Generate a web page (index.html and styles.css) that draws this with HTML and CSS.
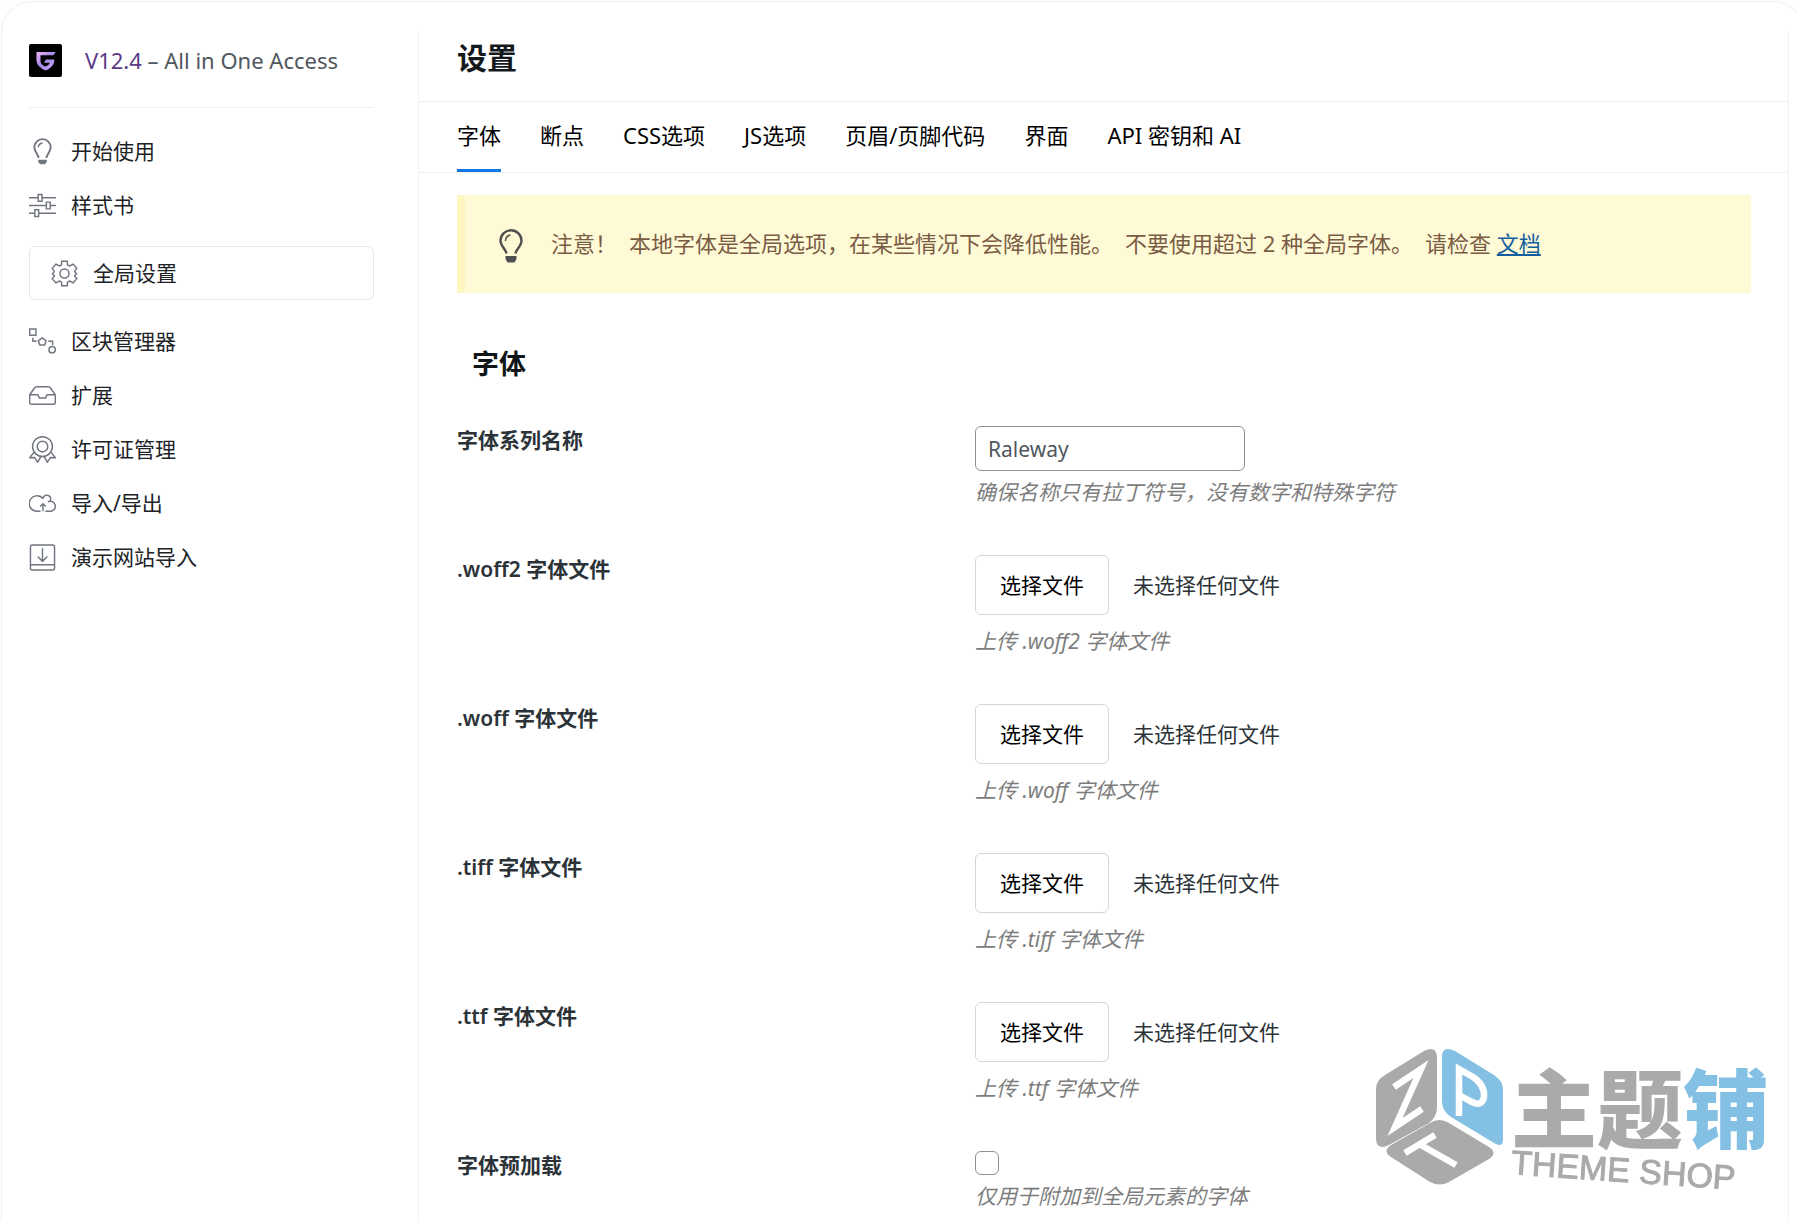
FILE: index.html
```html
<!DOCTYPE html>
<html lang="zh-CN">
<head>
<meta charset="utf-8">
<meta name="viewport" content="width=device-width, initial-scale=1">
<title>设置</title>
<link rel="stylesheet" href="styles.css">
</head>
<body>
<div class="frame">
  <aside class="sidebar">
    <div class="brand">
      <svg class="brand-logo" viewBox="0 0 33 33" aria-hidden="true">
        <defs><linearGradient id="shield" x1="0" y1="0" x2="1" y2="1"><stop offset="0" stop-color="#f3b5f5"/><stop offset=".45" stop-color="#a78bea"/><stop offset="1" stop-color="#c9a5f5"/></linearGradient></defs>
        <rect width="33" height="33" rx="2" fill="#000"/>
        <path d="M7.500 8H26.500L24.500 11.200H11.500V17.500q.5 3.500 5.200 5 3.300-1.500 4.300-3.700H15l2-3.300h8.300V17q-.5 6-8.600 9.500-8.700-3.500-9.200-9.500z" fill="url(#shield)"/>
      </svg>
      <p class="brand-text"><a href="#version">V12.4</a> – All in One Access</p>
    </div>
    <nav class="menu">
      <a class="menu-item" href="#start">
        <svg class="icon" viewBox="0 0 28 28"><path d="M10 20.500C9.500 17 5.500 14 5.500 9.700a8.500 8.500 0 0 1 17 0C22.500 14 18.500 17 18 20.500" stroke-width="2"/><path d="M9.500 9.500q.5-3.500 4.500-4.300"/><path d="M9.500 22.500h9v2.200l-2 2.500h-5l-2-2.500z" fill="currentColor" stroke="none"/></svg>
        开始使用</a>
      <a class="menu-item" href="#stylebook">
        <svg class="icon" viewBox="0 0 28 28"><path d="M0 6h9.500M13.500 6H28M0 14h18M22 14h6M0 22h6M10 22h18M9.500 2.500h4v7h-4zM18 10.500h4v7h-4zM6 18.500h4v7H6z"/></svg>
        样式书</a>
      <a class="menu-item is-current" href="#global" aria-current="page">
        <svg class="icon" viewBox="0 0 28 28"><path d="M11 5V1.200h6V5l2.500 1.200 3.300-2 4 4.500-2.300 2.800.7 1.700 1.300.8-.3 1.200-1.700.8v.8l2.300 2.500-4 4.500-3.300-2L17 23v3.800h-6V23l-2.500-1.200-3.300 2-4-4.500L3.500 16.800V16l-1.700-.8-.3-1.200 1.300-.8.700-1.700L1.200 8.700l4-4.500 3.300 2z" stroke-linejoin="round"/><circle cx="14" cy="14" r="4.700"/></svg>
        全局设置</a>
      <a class="menu-item" href="#blocks">
        <svg class="icon" viewBox="0 0 28 28"><path d="M.7 1h6.500v6.500H.7zM4 10v3.800h4M20 13.800h4.500V17.500M13.700 10.200l4 3-1.500 4.500h-5l-1.500-4.500z"/><circle cx="24" cy="22.500" r="3.300"/></svg>
        区块管理器</a>
      <a class="menu-item" href="#extensions">
        <svg class="icon" viewBox="0 0 28 28"><path d="M.7 13.200 5.500 6.500q1-1.500 2.500-1.500h12q1.500 0 2.500 1.500l4.800 6.700V21q0 2-2 2H2.700q-2 0-2-2zM.7 13.200h8.500l1.600 3.300h6.400l1.600-3.300h8.500"/></svg>
        扩展</a>
      <a class="menu-item" href="#license">
        <svg class="icon" viewBox="0 0 28 28"><circle cx="14" cy="11" r="10.300"/><circle cx="14" cy="11" r="5.500"/><path d="m5 17-4.300 5.500 5-.3 3.300 5 3.500-6M23 17l4.300 5.500-5-.3-3.300 5-3.500-6"/></svg>
        许可证管理</a>
      <a class="menu-item" href="#transfer">
        <svg class="icon" viewBox="0 0 28 28"><path d="M12 22H8.500A8 8 0 1 1 14.500 9M14.500 9a4 4 0 1 1 7 3M19.500 12.300a5.200 5.200 0 1 1 2.500 9.700H17M14.500 22v-7.500M11.500 17.200l3-3 3 3"/></svg>
        导入/导出</a>
      <a class="menu-item" href="#demo">
        <svg class="icon" viewBox="0 0 28 28"><rect x="1.500" y="1" width="25" height="26" rx="2"/><path d="M1.500 21.500h25M14 4.500v13M9 13l5 5 5-5"/></svg>
        演示网站导入</a>
    </nav>
  </aside>

  <main class="content">
    <header class="page-head"><h1>设置</h1></header>
    <nav class="tabs">
      <a class="tab is-active" href="#fonts">字体</a>
      <a class="tab" href="#breakpoints">断点</a>
      <a class="tab" href="#css">CSS选项</a>
      <a class="tab" href="#js">JS选项</a>
      <a class="tab" href="#codes">页眉/页脚代码</a>
      <a class="tab" href="#interface">界面</a>
      <a class="tab" href="#api">API 密钥和 AI</a>
    </nav>

    <div class="notice">
      <svg class="notice-icon" viewBox="0 -4 28 38"><path d="M9.500 24.500C9 20.500 3.500 17 3.500 11.800a10.500 10.500 0 0 1 21 0C24.500 17 19 20.500 18.500 24.500" fill="none" stroke="currentColor" stroke-width="2.400"/><path d="M8.500 12q0-5 5-6" fill="none" stroke="currentColor" stroke-width="1.500"/><path d="M8.500 27h11v3l-2 3.500h-7l-2-3.500z" fill="currentColor"/></svg>
      <p class="notice-text"><span>注意！</span> <span>本地字体是全局选项，在某些情况下会降低性能。</span> <span>不要使用超过 2 种全局字体。</span> <span>请检查 <a href="#docs">文档</a></span></p>
    </div>

    <form class="form">
      <h2>字体</h2>
      <div class="row">
        <label class="row-label" for="family">字体系列名称</label>
        <div class="field">
          <input class="text-input" id="family" type="text" placeholder="Raleway">
          <p class="hint">确保名称只有拉丁符号，没有数字和特殊字符</p>
        </div>
      </div>
      <div class="row">
        <label class="row-label" for="woff2">.woff2 字体文件</label>
        <div class="field">
          <div class="file"><button class="file-button" type="button" tabindex="-1">选择文件</button><span>未选择任何文件</span><input id="woff2" type="file"></div>
          <p class="hint">上传 .woff2 字体文件</p>
        </div>
      </div>
      <div class="row">
        <label class="row-label" for="woff">.woff 字体文件</label>
        <div class="field">
          <div class="file"><button class="file-button" type="button" tabindex="-1">选择文件</button><span>未选择任何文件</span><input id="woff" type="file"></div>
          <p class="hint">上传 .woff 字体文件</p>
        </div>
      </div>
      <div class="row">
        <label class="row-label" for="tiff">.tiff 字体文件</label>
        <div class="field">
          <div class="file"><button class="file-button" type="button" tabindex="-1">选择文件</button><span>未选择任何文件</span><input id="tiff" type="file"></div>
          <p class="hint">上传 .tiff 字体文件</p>
        </div>
      </div>
      <div class="row">
        <label class="row-label" for="ttf">.ttf 字体文件</label>
        <div class="field">
          <div class="file"><button class="file-button" type="button" tabindex="-1">选择文件</button><span>未选择任何文件</span><input id="ttf" type="file"></div>
          <p class="hint">上传 .ttf 字体文件</p>
        </div>
      </div>
      <div class="row">
        <label class="row-label" for="preload">字体预加载</label>
        <div class="field">
          <input class="check" id="preload" type="checkbox">
          <p class="hint">仅用于附加到全局元素的字体</p>
        </div>
      </div>
    </form>
  </main>
</div>

<div class="watermark">
  <svg class="cube" viewBox="0 0 130 138" aria-hidden="true">
    <path d="M10 28 49 4q13-6 13 7v49q0 10-8 16L14 98q-13 6-13-7V42q0-9 9-14z" fill="#aaa"/>
    <path d="M80 4l39 24q9 6 9 14v51q0 8-9 3L76 70q-9-6-9-16V10q0-12 13-6z" fill="#84c0e3"/>
    <path d="M55 76q9-6 19 0l40 24q9 6 0 12L74 135q-9 5-19 0L16 110q-9-6 0-12z" fill="#aaa"/>
    <g fill="none" stroke="#fff" stroke-width="6.500"><path d="M19 40 46 22 20 80 47 62"/><path d="M84 69V22l14 8q12 8 11 20-2 10-12 5L84 48"/><path d="M60 88 30 106M44 97l37 21"/></g>
  </svg>
  <div class="watermark-text">
    <div class="watermark-name">主题<span>铺</span></div>
    <div class="watermark-sub">THEME SHOP</div>
  </div>
</div>
</body>
</html>
```
FILE: styles.css
```css
* { box-sizing: border-box; }

body {
  margin: 0;
  overflow-x: hidden;
  background: #fdfefe;
  color: #2c3338;
  font: 21px/28px "Noto Sans", "Noto Sans CJK SC", sans-serif;
}

h1, h2, p { margin: 0; }

.frame {
  display: grid;
  grid-template-columns: 417px 1fr;
  min-height: 100vh;
  margin: 1px -8px 0 1px;
  border: 1px solid #eef1f2;
  border-bottom: 0;
  border-radius: 32px 32px 0 0;
  background: #fff;
}

.sidebar {
  margin-top: 28px;
  padding: 13px 44px 0 27px;
  border-right: 1px solid #f1f3f4;
}

.brand {
  display: flex;
  align-items: center;
  gap: 23px;
  padding-bottom: 30px;
  border-bottom: 1px solid #edf0f1;
}

.brand-logo { width: 33px; height: 33px; }
.brand-text { color: #50575e; font-size: 22px; line-height: 34px; }
.brand-text a { color: #5b3a86; text-decoration: none; }

.menu { display: flex; flex-direction: column; padding-top: 16px; }

.menu-item {
  display: flex;
  align-items: center;
  gap: 15px;
  height: 54px;
  color: #1d2327;
  text-decoration: none;
}

.icon {
  width: 27px;
  height: 27px;
  color: #70757f;
  fill: none;
  stroke: currentColor;
  stroke-width: 1.5;
}

.menu-item.is-current {
  margin: 14px 0;
  padding: 0 21px;
  border: 1px solid #e5e7ea;
  border-radius: 6px;
}

.content {
  margin: 28px 15px 0 0;
  border-right: 1px solid #f1f3f4;
}

.page-head { padding: 9px 38px 24px; border-bottom: 1px solid #edf0f1; }
h1 { color: #14191d; font-size: 30px; line-height: 38px; }

.tabs {
  display: flex;
  gap: 39px;
  padding: 0 38px;
  border-bottom: 1px solid #edf0f1;
}

.tab {
  height: 70px;
  padding-top: 19px;
  color: #000;
  font-size: 22px;
  text-decoration: none;
}

.tab.is-active { border-bottom: 3px solid #1477e6; }

.notice {
  display: flex;
  align-items: center;
  gap: 26px;
  min-height: 98px;
  margin: 22px 37px 0 38px;
  padding: 0 32px;
  border-left: 8px solid #fff6c2;
  background: #fffad6;
  color: #7a5c45;
  font-size: 22px;
}

.notice-icon { flex: none; width: 28px; height: 38px; color: #4f4f4f; }
.notice-text { display: flex; flex-wrap: wrap; column-gap: 12px; padding-bottom: 2px; }
.notice a { color: #135e9e; }

.form { padding: 53px 38px 0; }
h2 { margin: 0 15px 44px; color: #101517; font-size: 27px; line-height: 36px; }

.row { display: grid; grid-template-columns: 518px 1fr; padding-bottom: 49px; }
.row-label { color: #2c3338; font-weight: 600; }

.text-input {
  display: block;
  width: 270px;
  height: 45px;
  margin-bottom: 7px;
  padding: 0 12px;
  border: 1px solid #8c8f94;
  border-radius: 6px;
  background: #fff;
  color: #50575e;
  font: inherit;
}

.text-input::placeholder { color: #50575e; }
.hint { color: #7d7d7d; font-style: italic; }

.file { display: flex; position: relative; align-items: center; gap: 24px; margin-bottom: 12px; }
.file input { position: absolute; inset: 0; opacity: 0; }

.file-button {
  width: 134px;
  height: 60px;
  border: 1px solid #d3d5d8;
  border-radius: 6px;
  background: #fff;
  color: #000;
  font: inherit;
}

.check {
  display: block;
  appearance: none;
  width: 24px;
  height: 24px;
  margin: 0 0 7px;
  border: 1px solid #8c8f94;
  border-radius: 6px;
  background: #fff;
}

.watermark {
  display: flex;
  position: fixed;
  right: 28px;
  bottom: 33px;
  gap: 6px;
  color: #aaa;
}

.cube { width: 130px; height: 138px; }
.watermark-text { padding-top: 17px; }
.watermark-name { font-size: 86px; font-weight: 900; line-height: 89px; }
.watermark-name span { color: #84c0e3; }
.watermark-sub {
  font-family: "Liberation Sans", sans-serif;
  font-size: 34px;
  line-height: 36px;
  -webkit-text-stroke: 1px #aaa;
  transform: rotate(4deg);
}
```
